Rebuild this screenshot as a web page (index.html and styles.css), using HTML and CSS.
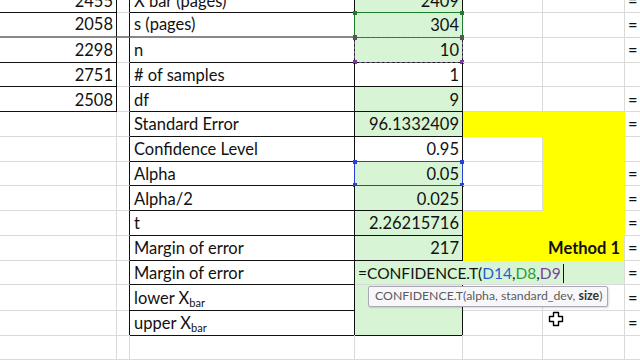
FILE: index.html
```html
<!DOCTYPE html>
<html lang="en">
<head>
    <meta charset="UTF-8">
    <title>Confidence interval - Method 1</title>
    <link rel="stylesheet" href="styles.css">
</head>
<body>
    <div class="sheet">
        <div class="row">
            <div class="cell num box">2455</div>
            <div class="cell edge"></div>
            <div class="cell box">X bar (pages)</div>
            <div class="cell num box green">2409</div>
            <div class="cell"></div>
            <div class="cell"></div>
            <div class="cell eq">=</div>
        </div>
        <div class="row">
            <div class="cell num box cut">2058</div>
            <div class="cell edge cut"></div>
            <div class="cell box cut">s (pages)</div>
            <div class="cell num box green">304
                <div class="ref ref-green"><i class="tl"></i><i class="tr"></i><i class="bl"></i><i class="br"></i></div>
            </div>
            <div class="cell"></div>
            <div class="cell"></div>
            <div class="cell eq">=</div>
        </div>
        <div class="row">
            <div class="cell num box">2298</div>
            <div class="cell edge"></div>
            <div class="cell box">n</div>
            <div class="cell num box green">10
                <div class="ref ref-purple"><i class="tl"></i><i class="tr"></i><i class="bl"></i><i class="br"></i></div>
            </div>
            <div class="cell"></div>
            <div class="cell"></div>
            <div class="cell eq">=</div>
        </div>
        <div class="row">
            <div class="cell num box">2751</div>
            <div class="cell edge"></div>
            <div class="cell box"># of samples</div>
            <div class="cell num box">1</div>
            <div class="cell"></div>
            <div class="cell"></div>
            <div class="cell eq"></div>
        </div>
        <div class="row">
            <div class="cell num box">2508</div>
            <div class="cell edge"></div>
            <div class="cell box">df</div>
            <div class="cell num box green">9</div>
            <div class="cell"></div>
            <div class="cell"></div>
            <div class="cell eq">=</div>
        </div>
        <div class="row">
            <div class="cell"></div>
            <div class="cell edge"></div>
            <div class="cell box">Standard Error</div>
            <div class="cell num box green">96.1332409</div>
            <div class="cell yellow"></div>
            <div class="cell yellow"></div>
            <div class="cell eq">=</div>
        </div>
        <div class="row">
            <div class="cell"></div>
            <div class="cell edge"></div>
            <div class="cell box">Confidence Level</div>
            <div class="cell num box">0.95</div>
            <div class="cell"></div>
            <div class="cell yellow"></div>
            <div class="cell eq"></div>
        </div>
        <div class="row">
            <div class="cell"></div>
            <div class="cell edge"></div>
            <div class="cell box">Alpha</div>
            <div class="cell num box green">0.05
                <div class="ref ref-blue"><i class="tl"></i><i class="tr"></i><i class="bl"></i><i class="br"></i></div>
            </div>
            <div class="cell"></div>
            <div class="cell yellow"></div>
            <div class="cell eq">=</div>
        </div>
        <div class="row">
            <div class="cell"></div>
            <div class="cell edge"></div>
            <div class="cell box">Alpha/2</div>
            <div class="cell num box green">0.025</div>
            <div class="cell"></div>
            <div class="cell yellow"></div>
            <div class="cell eq">=</div>
        </div>
        <div class="row">
            <div class="cell"></div>
            <div class="cell edge"></div>
            <div class="cell box">t</div>
            <div class="cell num box green">2.26215716</div>
            <div class="cell yellow"></div>
            <div class="cell yellow"></div>
            <div class="cell eq">=</div>
        </div>
        <div class="row">
            <div class="cell"></div>
            <div class="cell edge"></div>
            <div class="cell box">Margin of error</div>
            <div class="cell num box green">217</div>
            <div class="cell yellow"></div>
            <div class="cell num yellow method">Method 1</div>
            <div class="cell eq">=</div>
        </div>
        <div class="row">
            <div class="cell"></div>
            <div class="cell edge"></div>
            <div class="cell box">Margin of error</div>
            <div class="cell box green editing">
                <span class="formula">=CONFIDENCE.T(<span class="c-blue">D14</span>,<span class="c-green">D8</span>,<span class="c-purple">D9</span></span><span class="caret"></span>
                <div class="tip">CONFIDENCE.T(alpha, standard_dev, <b>size</b>)</div>
            </div>
            <div class="cell eq">=</div>
        </div>
        <div class="row">
            <div class="cell"></div>
            <div class="cell edge"></div>
            <div class="cell box low">lower X<sub>bar</sub></div>
            <div class="cell box green"></div>
            <div class="cell"></div>
            <div class="cell"></div>
            <div class="cell eq">=</div>
        </div>
        <div class="row">
            <div class="cell"></div>
            <div class="cell edge"></div>
            <div class="cell box low">upper X<sub>bar</sub></div>
            <div class="cell box green"></div>
            <div class="cell"></div>
            <div class="cell">
                <svg class="pointer" width="16" height="16" viewBox="0 0 16 16">
                    <path d="M5.5 1.5h5v4h4v5h-4v4h-5v-4h-4v-5h4z" fill="#fff" stroke="#000" stroke-width="1.4" stroke-linejoin="round"/>
                </svg>
            </div>
            <div class="cell eq">=</div>
        </div>
        <div class="row">
            <div class="cell"></div>
            <div class="cell"></div>
            <div class="cell"></div>
            <div class="cell"></div>
            <div class="cell"></div>
            <div class="cell"></div>
            <div class="cell eq"></div>
        </div>
    </div>
</body>
</html>
```

FILE: styles.css
```css
body {
    margin: 0;
    background: #fff;
    font-family: Lato, "Open Sans", sans-serif;
    color: #111;
    overflow: hidden;
    width: 640px;
    height: 360px;
}
.sheet {
    margin-top: -11.75px;
}
.row {
    display: grid;
    grid-template-columns: 117px 13px 225px 108px 80px 82px 40px;
    height: 24.75px;
}
.cell {
    box-sizing: border-box;
    position: relative;
    display: flex;
    align-items: flex-end;
    padding: 0 3px 3px 4px;
    border-right: 1px solid #dadada;
    border-bottom: 1px solid #dadada;
    font-size: 16.5px;
    line-height: 1;
    white-space: nowrap;
}
.num {
    justify-content: flex-end;
}
.box {
    border-right-color: #111;
    border-bottom-color: #111;
}
.edge {
    border-right-color: #111;
}
.cut {
    border-bottom: 2px solid #888;
}
.green {
    background: #d7f5d4;
}
.yellow {
    background: #ffff00;
    border-right-color: #ffff00;
    border-bottom-color: #ffff00;
}
.method {
    font-weight: 700;
    border-right-color: #dadada;
    padding-right: 4px;
}
.eq {
    padding-left: 3px;
}
.low {
    display: block;
    padding-top: 5px;
}
sub {
    font-size: 11px;
    vertical-align: -3px;
    line-height: 0;
}

/* range references shown while editing the formula */
.ref {
    position: absolute;
    top: -1px;
    left: -1px;
    right: -1px;
    bottom: -1px;
    border: 1px solid;
}
.ref i {
    position: absolute;
    width: 4px;
    height: 4px;
    background: currentColor;
}
.ref .tl { top: -2px; left: -2px; }
.ref .tr { top: -2px; right: -2px; }
.ref .bl { bottom: -2px; left: -2px; }
.ref .br { bottom: -2px; right: -2px; }
.ref-green {
    color: #1e7d2a;
}
.ref-blue {
    color: #2a3fd6;
}
.ref-purple {
    color: #7a3a9c;
    border-style: dashed;
    border-color: #6b5b7c;
}
.ref-purple .tl, .ref-purple .tr {
    background: #555;
}

.editing {
    grid-column: span 3;
    padding-left: 3px;
    border-right-color: #dadada;
    border-bottom-color: #dadada;
}
.formula {
    font-size: 15.5px;
}
.c-blue { color: #2b5bd0; }
.c-green { color: #2f9a3b; }
.c-purple { color: #7d3f9e; }
.caret {
    display: inline-block;
    width: 1px;
    height: 19px;
    margin-left: 2px;
    margin-bottom: -2px;
    background: #111;
}
.tip {
    position: absolute;
    left: 13px;
    top: calc(100% + 2px);
    z-index: 2;
    padding: 3px 5px 3px 6px;
    background: #f7f7fa;
    border: 1px solid #a9a9b3;
    border-radius: 2px;
    box-shadow: 1px 1px 2px rgba(0,0,0,0.15);
    color: #5b5b5b;
    font-size: 12.3px;
    line-height: 1;
}
.tip b {
    color: #333;
}
.pointer {
    position: absolute;
    left: 5px;
    top: 1px;
}
```
